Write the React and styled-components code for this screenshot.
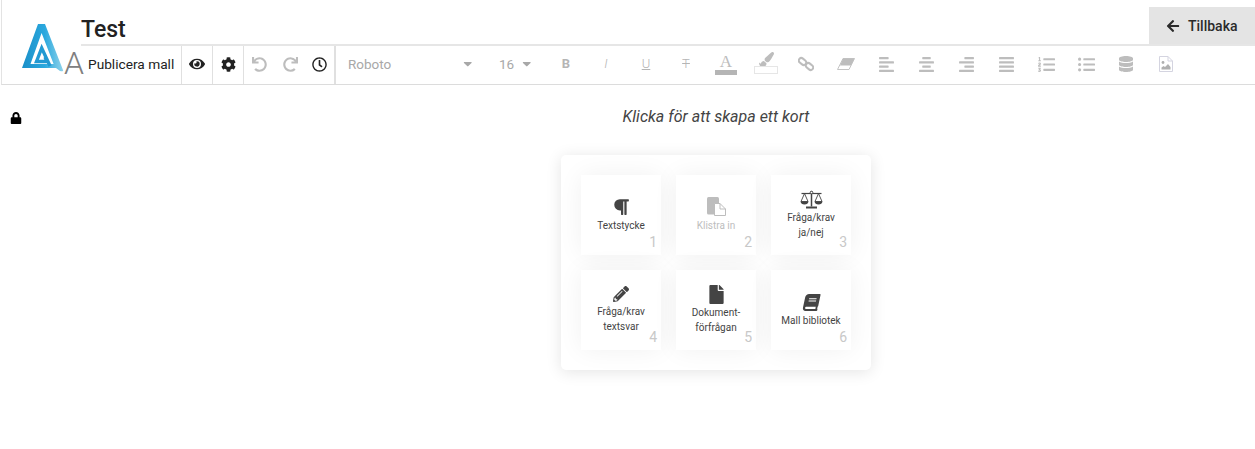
import styled, { createGlobalStyle } from "styled-components";
import {
  FaEye, FaCog, FaUndo, FaRedo, FaRegClock, FaPaintBrush, FaAlignLeft, FaAlignCenter,
  FaAlignRight, FaAlignJustify, FaListOl, FaListUl, FaDatabase, FaArrowLeft, FaLock,
  FaCaretDown, FaParagraph, FaPencilAlt, FaFile, FaBook,
} from "react-icons/fa";

const Global = createGlobalStyle`
  html, body { margin: 0; background: #fff; }
  body { font-family: Roboto, "Liberation Sans", sans-serif; min-height: 449px; }
  * { box-sizing: border-box; }
`;

const Header = styled.header`
  display: flex;
  height: 85px;
  margin-left: 1px;
  border-left: 1px solid #e3e3e3;
  border-bottom: 1px solid #dcdcdc;
`;

const Logo = styled.div`
  width: 79px;
  flex: none;
  position: relative;
  padding: 24px 0 0 20px;
`;

const LogoLetter = styled.span`
  position: absolute;
  left: 62px;
  top: 45px;
  font-size: 32px;
  line-height: 36px;
  font-weight: 300;
  color: #808080;
`;

const Main = styled.div`
  flex: 1;
  min-width: 0;
  display: flex;
  flex-direction: column;
`;

const TitleRow = styled.div`
  height: 46px;
  display: flex;
  justify-content: space-between;
  border-bottom: 2px solid #e6e6e6;
`;

const Title = styled.h1`
  margin: 0;
  padding-top: 15px;
  font-size: 23px;
  line-height: 29px;
  font-weight: 500;
  color: #222;
`;

const BackButton = styled.button`
  align-self: flex-end;
  width: 106px;
  height: 37px;
  border: 0;
  padding: 0 0 0 17px;
  background: #e4e4e4;
  display: flex;
  align-items: center;
  gap: 8px;
  font: 500 14px Roboto, sans-serif;
  color: #2b2b2b;
`;

const Toolbar = styled.div`
  flex: 1;
  display: flex;
  align-items: stretch;
  margin-left: 2px;
`;

const PublishLabel = styled.div`
  width: 99px;
  display: flex;
  align-items: center;
  padding: 0 0 2px 5px;
  font-size: 13.7px;
  color: #222;
  white-space: nowrap;
  border-right: 1px solid #e0e0e0;
`;

const ToolCell = styled.div`
  width: ${(p) => p.$w || 31}px;
  flex: none;
  display: flex;
  align-items: center;
  justify-content: center;
  padding-bottom: 2px;
  font-size: ${(p) => p.$size || 15}px;
  color: ${(p) => (p.$off ? "#bdbdbd" : "#222")};
  border-right: ${(p) => (p.$line ? `${p.$line}px solid #e0e0e0` : "0")};
`;

const Glyph = styled.span`
  font-size: 13px;
  line-height: 16px;
  font-weight: ${(p) => (p.$bold ? 700 : 300)};
  font-style: ${(p) => (p.$italic ? "italic" : "normal")};
  text-decoration: ${(p) => p.$line || "none"};
  color: #b5b5b5;
`;

const FontSelect = styled.div`
  width: 150px;
  flex: none;
  display: flex;
  align-items: center;
  justify-content: space-between;
  padding: 0 12px 2px;
  font-size: 13.5px;
  color: #a8a8a8;
`;

const SizeSelect = styled.div`
  width: 60px;
  flex: none;
  display: flex;
  align-items: center;
  gap: 6px;
  padding: 0 0 2px 13px;
  font-size: 13.5px;
  color: #a8a8a8;
`;

const FontColor = styled.div`
  display: flex;
  flex-direction: column;
  align-items: center;
  width: 22px;
  font: 17px/15px "Liberation Serif", serif;
  color: #bdbdbd;
  &::after {
    content: "";
    width: 22px;
    height: 5px;
    margin-top: 1px;
    background: #b5b5b5;
  }
`;

const BrushStack = styled.div`
  display: flex;
  flex-direction: column;
  align-items: center;
  margin-top: -3px;
  &::after {
    content: "";
    width: 22px;
    height: 6px;
    margin-top: -1px;
    border: 1px solid #e6e6e6;
  }
`;

const Content = styled.main`
  position: relative;
  display: flex;
  flex-direction: column;
  align-items: center;
  padding: 22px 0 0 177px;
`;

const LockIcon = styled.div`
  position: absolute;
  left: 10px;
  top: 27px;
  font-size: 12px;
  line-height: 12px;
  color: #000;
`;

const Hint = styled.p`
  margin: 0 0 28px;
  font-size: 16px;
  line-height: 20px;
  font-style: italic;
  color: #444;
`;

const CardPanel = styled.section`
  width: 310px;
  height: 215px;
  padding: 20px;
  display: grid;
  grid-template-columns: repeat(3, 80px);
  grid-auto-rows: 80px;
  gap: 15px;
  background: #fff;
  border-radius: 5px;
  box-shadow: 0 2px 16px rgba(0, 0, 0, 0.11);
`;

const Card = styled.div`
  position: relative;
  background: #fff;
  display: flex;
  flex-direction: column;
  align-items: center;
  justify-content: center;
  text-align: center;
  font-size: 10px;
  line-height: 15px;
  padding-top: ${(p) => p.$shift || 0}px;
  color: ${(p) => (p.$off ? "#bdbdbd" : "#444")};
  box-shadow: 0 0 24px rgba(0, 0, 20, 0.06);
  svg { font-size: ${(p) => p.$icon || 18}px; margin-bottom: ${(p) => p.$gap ?? 2}px; }
`;

const CardNumber = styled.span`
  position: absolute;
  right: 4px;
  bottom: 5px;
  font-size: 14px;
  line-height: 16px;
  color: #c8c8c8;
`;

const SlantBook = styled(FaBook)`
  transform: skewX(-12deg);
`;

const LinkIcon = () => (
  <svg width="16" height="16" viewBox="0 0 16 16" fill="none" stroke="#bdbdbd" strokeWidth="2">
    <rect x="0.5" y="3" width="8" height="5" rx="2.5" transform="rotate(40 4.5 5.5)" />
    <rect x="7.5" y="8" width="8" height="5" rx="2.5" transform="rotate(40 11.5 10.5)" />
  </svg>
);

const EraserIcon = () => (
  <svg width="18" height="12" viewBox="0 0 18 12">
    <path d="M6 0.5h11.5l-5.5 11H0.5z" fill="#fff" stroke="#c4c4c4" />
    <path d="M6 0.5h11.5l-3.5 7H3z" fill="#bdbdbd" />
  </svg>
);

const ImageFileIcon = () => (
  <svg width="14" height="16" viewBox="0 0 14 16">
    <path d="M0.5 0.5h8.5l4.5 4.5v10.5h-13z" fill="#fff" stroke="#d4d4e0" />
    <path d="M9 0.5v4.5h4.5" fill="none" stroke="#d4d4e0" />
    <circle cx="4" cy="6.5" r="1.4" fill="#b0b0b0" />
    <path d="M2.5 13.5v-2l2-1.5 1.5 1 3-3 2.5 3v2.5z" fill="#b0b0b0" />
  </svg>
);

const PasteIcon = () => (
  <svg width="19" height="19" viewBox="0 0 19 19">
    <path d="M0 1.5q0-1.5 1.5-1.5h9q1.5 0 1.5 1.5v16h-10.5q-1.5 0-1.5-1.5z" fill="#bdbdbd" />
    <path d="M7.5 6.5h5.5l5.500 5.500v6.500h-11z" fill="#fff" stroke="#bdbdbd" />
    <path d="M13 6.5v5.500h5.500" fill="none" stroke="#bdbdbd" />
  </svg>
);

const ScaleIcon = () => (
  <svg width="23" height="19" viewBox="0 0 23 19" fill="none" stroke="#444">
    <path d="M11.5 1v15.5" strokeWidth="1.5" />
    <path d="M6 17.5h11" strokeWidth="2" />
    <path d="M1.5 3.5h20" strokeWidth="1.2" />
    <circle cx="11.5" cy="2.5" r="1.3" fill="#fff" />
    <path d="M4.5 3.5l-3.5 8h7zM18.5 3.5l-3.5 8h7z" strokeWidth="0.9" />
    <path d="M0.5 11.5h8q-0.5 3-4 3t-4-3zM14.5 11.5h8q-0.5 3-4 3t-4-3z" fill="#444" stroke="none" />
  </svg>
);

const cards = [
  { n: 1, icon: <FaParagraph />, text: ["Textstycke"], size: 18 },
  { n: 2, icon: <PasteIcon />, text: ["Klistra in"], off: true, size: 19 },
  { n: 3, icon: <ScaleIcon />, text: ["Fråga/krav", "ja/nej"], size: 19, gap: 1 },
  { n: 4, icon: <FaPencilAlt />, text: ["Fråga/krav", "textsvar"], size: 16 },
  { n: 5, icon: <FaFile />, text: ["Dokument-", "förfrågan"], size: 19, gap: 1 },
  { n: 6, icon: <SlantBook />, text: ["Mall bibliotek"], size: 17, shift: 2 },
];

export default function App() {
  return (
    <>
      <Global />
      <Header>
        <Logo>
          <svg width="44" height="48" viewBox="0 0 44 48">
            <defs>
              <linearGradient id="logoBlue" x1="0" y1="0" x2="1" y2="0">
                <stop offset="0" stopColor="#1a8fc8" />
                <stop offset="0.55" stopColor="#2aa8de" />
                <stop offset="1" stopColor="#90d3ea" />
              </linearGradient>
            </defs>
            <path
              fill="url(#logoBlue)"
              fillRule="evenodd"
              d="M16 0H23L41 46Q42 48 38 47L34 44H0ZM19.6 9L8.5 40H31.6Z"
            />
            <path
              fill="none"
              stroke="#2199d2"
              strokeWidth="3.4"
              d="M28 42L19.700 24 14.500 37.500H25L23 33"
            />
          </svg>
          <LogoLetter>A</LogoLetter>
        </Logo>
        <Main>
          <TitleRow>
            <Title>Test</Title>
            <BackButton><FaArrowLeft /> Tillbaka</BackButton>
          </TitleRow>
          <Toolbar>
            <PublishLabel>Publicera mall</PublishLabel>
            <ToolCell $line={1} $size={16}><FaEye /></ToolCell>
            <ToolCell $line={1} $size={15}><FaCog /></ToolCell>
            <ToolCell $off><FaUndo /></ToolCell>
            <ToolCell $w={30} $off><FaRedo /></ToolCell>
            <ToolCell $w={31} $line={2} $size={15}><FaRegClock /></ToolCell>
            <FontSelect>Roboto <FaCaretDown /></FontSelect>
            <SizeSelect>16 <FaCaretDown /></SizeSelect>
            <ToolCell $w={40}><Glyph $bold>B</Glyph></ToolCell>
            <ToolCell $w={40}><Glyph $italic>I</Glyph></ToolCell>
            <ToolCell $w={40}><Glyph $line="underline">U</Glyph></ToolCell>
            <ToolCell $w={40}><Glyph $line="line-through">T</Glyph></ToolCell>
            <ToolCell $w={40}><FontColor>A</FontColor></ToolCell>
            <ToolCell $w={40} $off $size={15}><BrushStack><FaPaintBrush /></BrushStack></ToolCell>
            <ToolCell $w={40}><LinkIcon /></ToolCell>
            <ToolCell $w={40}><EraserIcon /></ToolCell>
            <ToolCell $w={40} $off $size={17}><FaAlignLeft /></ToolCell>
            <ToolCell $w={40} $off $size={17}><FaAlignCenter /></ToolCell>
            <ToolCell $w={40} $off $size={17}><FaAlignRight /></ToolCell>
            <ToolCell $w={40} $off $size={17}><FaAlignJustify /></ToolCell>
            <ToolCell $w={40} $off $size={17}><FaListOl /></ToolCell>
            <ToolCell $w={40} $off $size={17}><FaListUl /></ToolCell>
            <ToolCell $w={40} $off $size={16}><FaDatabase /></ToolCell>
            <ToolCell $w={40}><ImageFileIcon /></ToolCell>
          </Toolbar>
        </Main>
      </Header>
      <Content>
        <LockIcon><FaLock /></LockIcon>
        <Hint>Klicka för att skapa ett kort</Hint>
        <CardPanel>
          {cards.map((c) => (
            <Card key={c.n} $off={c.off} $icon={c.size} $gap={c.gap} $shift={c.shift}>
              {c.icon}
              {c.text.map((t) => <span key={t}>{t}</span>)}
              <CardNumber>{c.n}</CardNumber>
            </Card>
          ))}
        </CardPanel>
      </Content>
    </>
  );
}
